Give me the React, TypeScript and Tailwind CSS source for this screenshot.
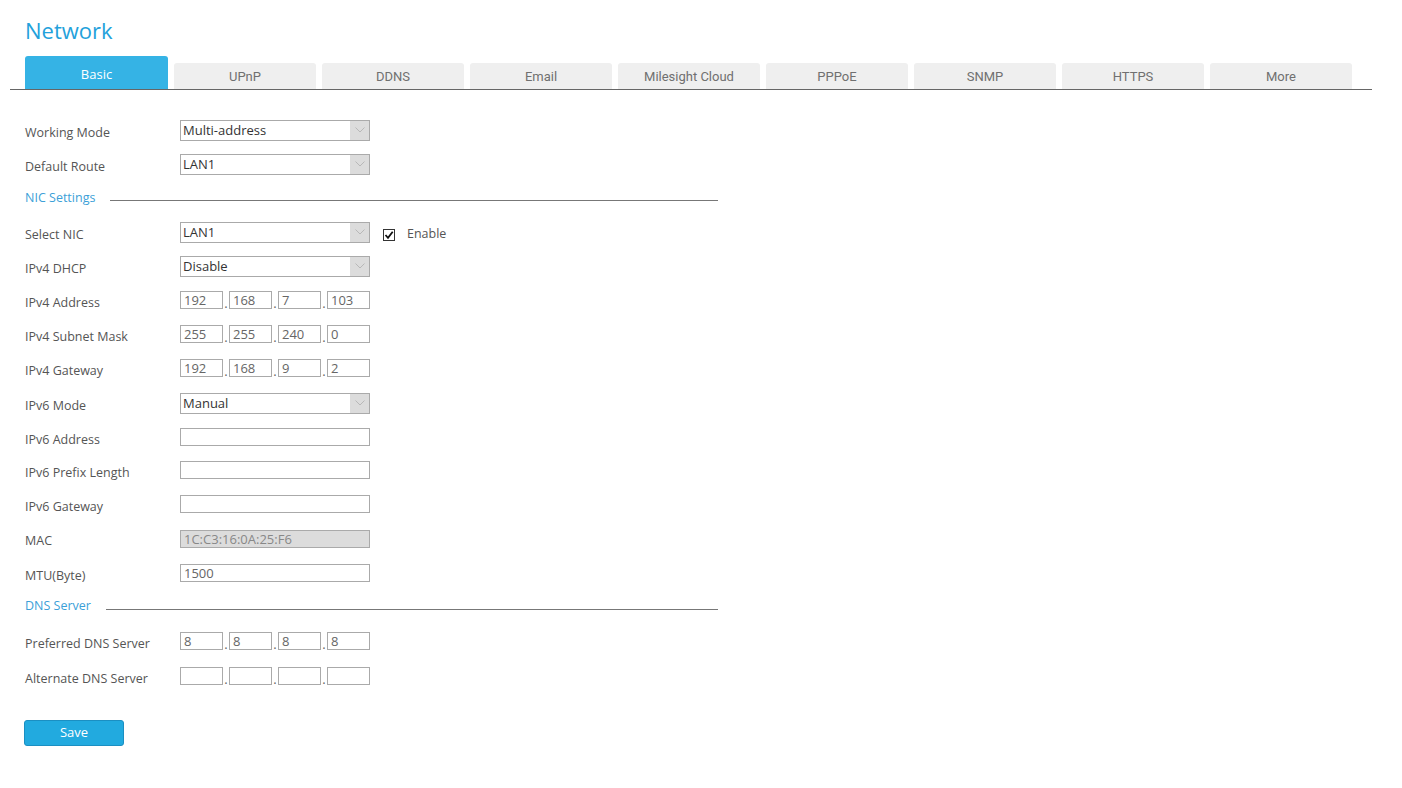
import React from 'react';

const tabs = ['Basic', 'UPnP', 'DDNS', 'Email', 'Milesight Cloud', 'PPPoE', 'SNMP', 'HTTPS', 'More'];

function Row({ label, h = 'h-[34px]', children }: { label: string; h?: string; children?: React.ReactNode }) {
  return (
    <div className={`flex items-center ${h}`}>
      <div className="w-[155px] shrink-0 pt-[6px] text-[12.5px] text-[#555]">{label}</div>
      {children}
    </div>
  );
}

function Select({ value }: { value: string }) {
  return (
    <div className="flex h-[21px] w-[190px] border border-[#aaa] bg-white">
      <div className="flex-1 pl-[2px] text-[13px] leading-[19px] text-[#333]">{value}</div>
      <div className="flex w-[19px] items-center justify-center bg-[#dcdcdc]">
        <svg width="10" height="6" viewBox="0 0 10 6" fill="none">
          <path d="M0.5 0.5 L5 5 L9.5 0.5" stroke="#b8b8b8" strokeWidth="1" />
        </svg>
      </div>
    </div>
  );
}

function TextBox({ value = '', disabled = false }: { value?: string; disabled?: boolean }) {
  return (
    <div
      className={`h-[18px] w-[190px] border border-[#aaa] pl-[3px] text-[13px] leading-[16px] ${
        disabled ? 'bg-[#dcdcdc] text-[#888]' : 'bg-white text-[#666]'
      }`}
    >
      {value}
    </div>
  );
}

function IpBox({ parts }: { parts: string[] }) {
  return (
    <div className="flex w-[190px] items-end">
      {parts.map((p, i) => (
        <React.Fragment key={i}>
          {i > 0 && <span className="w-[6px] text-center text-[13px] leading-[12px] text-[#666]">.</span>}
          <div className="h-[18px] w-[43px] border border-[#aaa] bg-white pl-[3px] text-[13px] leading-[16px] text-[#666]">
            {p}
          </div>
        </React.Fragment>
      ))}
    </div>
  );
}

function Section({ title, h = 'h-[34px]' }: { title: string; h?: string }) {
  return (
    <div className={`flex w-[693px] items-center ${h}`}>
      <span className="text-[12.5px] text-[#3c9fd8]">{title}</span>
      <div className="ml-[15px] mt-[5px] h-px flex-1 bg-[#777]" />
    </div>
  );
}

export default function App() {
  return (
    <div className="min-h-screen bg-white" style={{ fontFamily: '"Open Sans", "Noto Sans", sans-serif' }}>
      <div className="pl-[25px] pt-[15px] text-[22px] leading-[30px] text-[#23a1db]">Network</div>

      <div className="ml-[10px] mt-[11px] flex w-[1362px] items-end gap-[6px] border-b border-[#666] pl-[15px]">
        {tabs.map((t, i) =>
          i === 0 ? (
            <div
              key={t}
              className="flex h-[33px] w-[143px] items-center justify-center rounded-t-[3px] bg-[#35b3e5] pt-[5px] text-[13px] text-white"
            >
              {t}
            </div>
          ) : (
            <div
              key={t}
              className="flex h-[26px] w-[142px] items-center justify-center rounded-t-[3px] bg-[#efefef] pt-[1px] text-[13px] text-[#707070]"
              style={{ fontFamily: 'Roboto, sans-serif' }}
            >
              {t}
            </div>
          )
        )}
      </div>

      <div className="pl-[25px] pt-[23px]">
        <Row label="Working Mode">
          <Select value="Multi-address" />
        </Row>
        <Row label="Default Route">
          <Select value="LAN1" />
        </Row>
        <Section title="NIC Settings" />
        <Row label="Select NIC">
          <Select value="LAN1" />
          <div className="ml-[13px] mt-[5px] flex h-[12px] w-[12px] items-center justify-center border border-[#333] bg-white">
            <svg width="10" height="10" viewBox="0 0 10 10" fill="none">
              <path d="M1.5 5 L4 7.8 L8.7 1.8" stroke="#111" strokeWidth="1.8" />
            </svg>
          </div>
          <span className="ml-[12px] pt-[5px] text-[12.5px] text-[#555]">Enable</span>
        </Row>
        <Row label="IPv4 DHCP">
          <Select value="Disable" />
        </Row>
        <Row label="IPv4 Address">
          <IpBox parts={['192', '168', '7', '103']} />
        </Row>
        <Row label="IPv4 Subnet Mask">
          <IpBox parts={['255', '255', '240', '0']} />
        </Row>
        <Row label="IPv4 Gateway">
          <IpBox parts={['192', '168', '9', '2']} />
        </Row>
        <Row label="IPv6 Mode" h="h-[36px]">
          <Select value="Manual" />
        </Row>
        <Row label="IPv6 Address" h="h-[32px]">
          <TextBox />
        </Row>
        <Row label="IPv6 Prefix Length">
          <TextBox />
        </Row>
        <Row label="IPv6 Gateway">
          <TextBox />
        </Row>
        <Row label="MAC" h="h-[35px]">
          <TextBox value="1C:C3:16:0A:25:F6" disabled />
        </Row>
        <Row label="MTU(Byte)">
          <TextBox value="1500" />
        </Row>
        <Section title="DNS Server" h="h-[33px]" />
        <Row label="Preferred DNS Server" h="h-[36px]">
          <IpBox parts={['8', '8', '8', '8']} />
        </Row>
        <Row label="Alternate DNS Server">
          <IpBox parts={['', '', '', '']} />
        </Row>
        <button className="ml-[-1px] mt-[27px] h-[26px] w-[100px] rounded-[3px] border border-[#1b8fc2] bg-[#22aadf] text-[13px] text-white">
          Save
        </button>
      </div>
    </div>
  );
}
